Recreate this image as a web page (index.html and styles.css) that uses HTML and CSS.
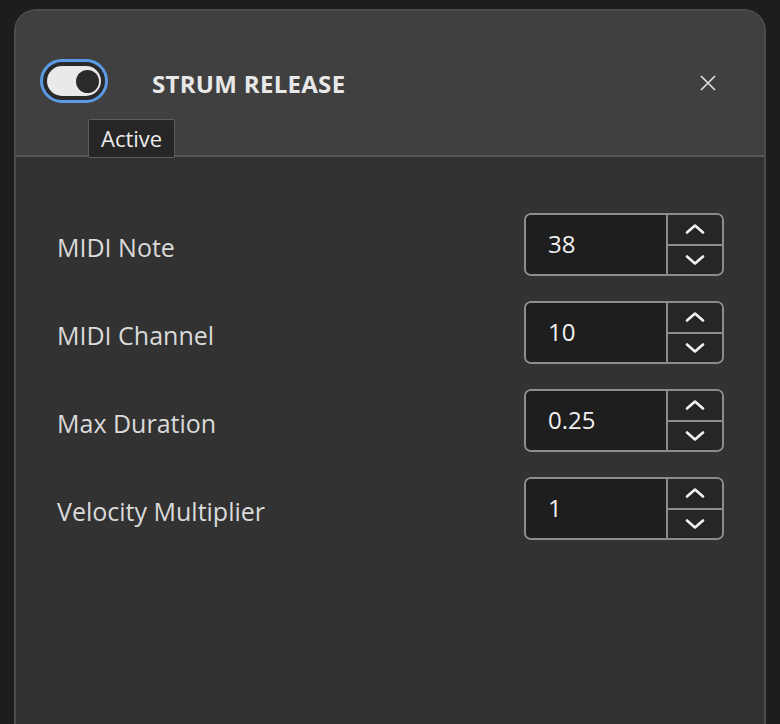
FILE: index.html
```html
<!DOCTYPE html>
<html lang="en">
<head>
<meta charset="utf-8">
<title>Strum Release</title>
<link rel="stylesheet" href="styles.css">
</head>
<body>
<div class="panel">
  <div class="header">
    <div class="toggle" role="switch" aria-checked="true">
      <div class="track"><div class="knob"></div></div>
    </div>
    <h1 class="title">STRUM RELEASE</h1>
    <button class="close" aria-label="Close">
      <svg width="16" height="16" viewBox="0 0 16 16"><path d="M1 1 L15 15 M15 1 L1 15" stroke="#e2e2e2" stroke-width="1.6" fill="none"/></svg>
    </button>
  </div>
  <div class="tooltip">Active</div>
  <div class="body">
    <div class="row">
      <span class="label">MIDI Note</span>
      <div class="spin">
        <div class="value">38</div>
        <div class="stepper">
          <div class="step"><svg width="20" height="10" viewBox="0 0 20 10"><polyline points="2,8.5 10,1.5 18,8.5" fill="none" stroke="#f2f2f2" stroke-width="2.6" stroke-linecap="round" stroke-linejoin="round"/></svg></div>
          <div class="step down"><svg width="20" height="10" viewBox="0 0 20 10"><polyline points="2,1.5 10,8.5 18,1.5" fill="none" stroke="#f2f2f2" stroke-width="2.6" stroke-linecap="round" stroke-linejoin="round"/></svg></div>
        </div>
      </div>
    </div>
    <div class="row">
      <span class="label">MIDI Channel</span>
      <div class="spin">
        <div class="value">10</div>
        <div class="stepper">
          <div class="step"><svg width="20" height="10" viewBox="0 0 20 10"><polyline points="2,8.5 10,1.5 18,8.5" fill="none" stroke="#f2f2f2" stroke-width="2.6" stroke-linecap="round" stroke-linejoin="round"/></svg></div>
          <div class="step down"><svg width="20" height="10" viewBox="0 0 20 10"><polyline points="2,1.5 10,8.5 18,1.5" fill="none" stroke="#f2f2f2" stroke-width="2.6" stroke-linecap="round" stroke-linejoin="round"/></svg></div>
        </div>
      </div>
    </div>
    <div class="row">
      <span class="label">Max Duration</span>
      <div class="spin">
        <div class="value">0.25</div>
        <div class="stepper">
          <div class="step"><svg width="20" height="10" viewBox="0 0 20 10"><polyline points="2,8.5 10,1.5 18,8.5" fill="none" stroke="#f2f2f2" stroke-width="2.6" stroke-linecap="round" stroke-linejoin="round"/></svg></div>
          <div class="step down"><svg width="20" height="10" viewBox="0 0 20 10"><polyline points="2,1.5 10,8.5 18,1.5" fill="none" stroke="#f2f2f2" stroke-width="2.6" stroke-linecap="round" stroke-linejoin="round"/></svg></div>
        </div>
      </div>
    </div>
    <div class="row">
      <span class="label">Velocity Multiplier</span>
      <div class="spin">
        <div class="value">1</div>
        <div class="stepper">
          <div class="step"><svg width="20" height="10" viewBox="0 0 20 10"><polyline points="2,8.5 10,1.5 18,8.5" fill="none" stroke="#f2f2f2" stroke-width="2.6" stroke-linecap="round" stroke-linejoin="round"/></svg></div>
          <div class="step down"><svg width="20" height="10" viewBox="0 0 20 10"><polyline points="2,1.5 10,8.5 18,1.5" fill="none" stroke="#f2f2f2" stroke-width="2.6" stroke-linecap="round" stroke-linejoin="round"/></svg></div>
        </div>
      </div>
    </div>
  </div>
</div>
</body>
</html>
```
FILE: styles.css
```css
html, body {
  margin: 0;
  padding: 0;
  height: 100%;
  overflow: hidden;
  background: #1d1d1d;
  font-family: "Open Sans", "Noto Sans", sans-serif;
}

.panel {
  position: relative;
  box-sizing: border-box;
  margin: 9px 14px 0 14px;
  height: calc(100% - 9px);
  border: 2px solid #4c4c4c;
  border-bottom: none;
  border-radius: 22px 22px 0 0;
  background: #323232;
  overflow: hidden;
}

.header {
  display: flex;
  align-items: center;
  height: 144px;
  padding-left: 24px;
  background: #404040;
  border-bottom: 2px solid #575757;
}

.toggle {
  box-sizing: border-box;
  display: flex;
  width: 68px;
  height: 44px;
  margin-top: -4px;
  padding: 4px;
  border: 3px solid #5b9be6;
  border-radius: 22px;
  background: #2a2a2a;
}

.track {
  flex: 1;
  display: flex;
  align-items: center;
  justify-content: flex-end;
  padding-right: 2px;
  border-radius: 15px;
  background: #e9e9e9;
}

.knob {
  width: 23px;
  height: 23px;
  border-radius: 50%;
  background: #2a2a2a;
}

.title {
  margin: 0 0 0 44px;
  font-size: 24px;
  font-weight: 700;
  letter-spacing: 0.3px;
  color: #e8e8e8;
}

.close {
  display: flex;
  margin: 0 48px 0 auto;
  padding: 0;
  border: none;
  background: none;
}

.tooltip {
  position: absolute;
  left: 72px;
  top: 108px;
  box-sizing: border-box;
  height: 39px;
  padding: 0 12px;
  line-height: 36px;
  font-size: 22px;
  color: #ececec;
  background: #262626;
  border: 1px solid #5e5e5e;
  border-radius: 2px;
}

.body {
  display: flex;
  flex-direction: column;
  gap: 25px;
  padding: 56px 40px 0 41px;
}

.row {
  display: flex;
  align-items: center;
  justify-content: space-between;
}

.label {
  font-size: 25px;
  color: #dadada;
  margin-top: 4px;
}

.spin {
  box-sizing: border-box;
  display: flex;
  width: 200px;
  height: 63px;
  border: 2px solid #8c8c8c;
  border-radius: 7px;
  overflow: hidden;
}

.value {
  display: flex;
  align-items: center;
  width: 142px;
  padding-left: 22px;
  padding-bottom: 2px;
  box-sizing: border-box;
  background: #1e1e1e;
  font-size: 24px;
  color: #f0f0f0;
  border-right: 2px solid #8c8c8c;
}

.stepper {
  flex: 1;
  display: flex;
  flex-direction: column;
  background: #262626;
}

.step {
  flex: 1;
  display: flex;
  align-items: center;
  justify-content: center;
}

.step.down {
  border-top: 2px solid #8c8c8c;
}
```
